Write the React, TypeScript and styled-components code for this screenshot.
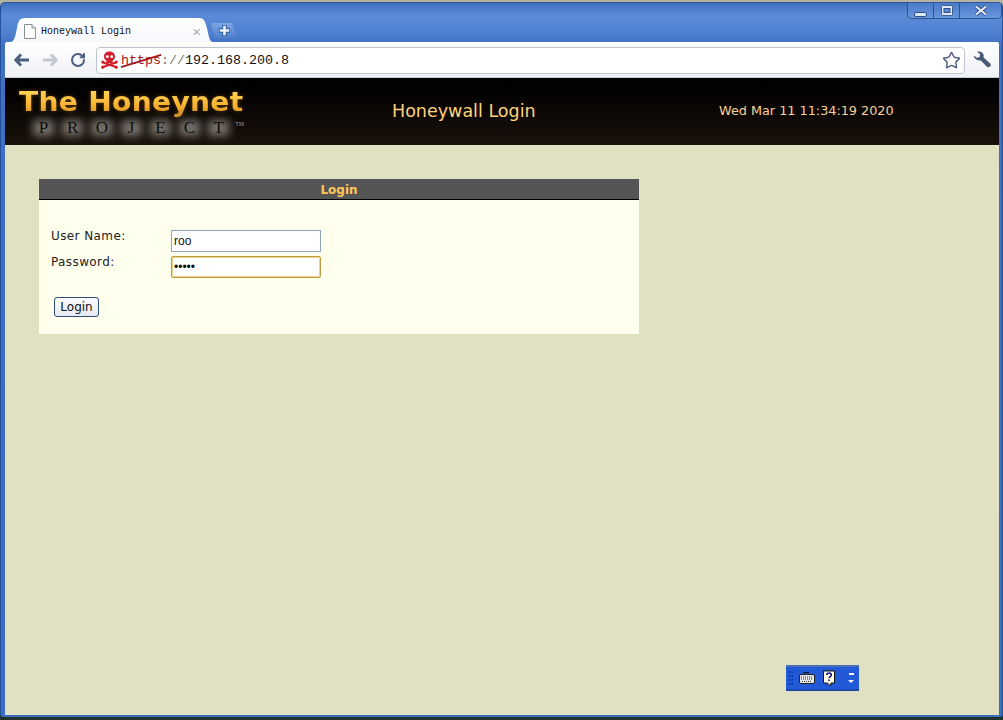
import React from 'react';
import styled, { createGlobalStyle } from 'styled-components';
import { Star, RotateCw } from 'lucide-react';

const GlobalStyle = createGlobalStyle`
  html, body {
    margin: 0;
    padding: 0;
    height: 100%;
    overflow: hidden;
    background: linear-gradient(180deg, #b5b3a0 0, #b5b3a0 6px, #22322c 6px);
  }
`;

const Frame = styled.div`
  position: relative;
  box-sizing: border-box;
  width: 1003px;
  height: 715px;
  margin-top: 2px;
  display: flex;
  flex-direction: column;
  padding: 0 3px 2px 4px;
  background: linear-gradient(180deg, #3f70bf 0, #5c8bd8 12px, #4f80d0 30px, #3f70c2 42px, #3a6cc0 100%);
  border-top: 1px solid #2d5a9e;
  border-left: 1px solid #24509c;
  border-right: 1px solid #24509c;
  border-radius: 5px 5px 3px 3px;
  font-family: "DejaVu Sans", sans-serif;
`;

const TitleStrip = styled.div`
  height: 39px;
  flex: none;
  display: flex;
  align-items: flex-end;
  justify-content: space-between;
`;

const TabRow = styled.div`
  display: flex;
  align-items: flex-end;
  padding-left: 5px;
`;

const Tab = styled.div`
  box-sizing: border-box;
  width: 203px;
  height: 24px;
  display: flex;
  align-items: center;
  padding: 2px 12px 0 14px;
  background: linear-gradient(180deg, #ffffff, #f6f8fc);
  clip-path: path('M0 24 C4 24 5 20 7 10 C8 3 10 0 15 0 L189 0 C194 0 195 3 197 10 C199 20 200 24 203 24 Z');
`;

const TabTitle = styled.span`
  flex: 1;
  margin-left: 5px;
  font: 10px "Liberation Mono", monospace;
  color: #111;
`;

const TabClose = styled.span`
  font: 15px "Liberation Sans", sans-serif;
  color: #a9adb3;
  line-height: 1;
`;

const NewTab = styled.div`
  width: 26px;
  height: 15px;
  margin: 0 0 4px -2px;
  display: flex;
  align-items: center;
  justify-content: center;
  background: linear-gradient(180deg, #7ea5e2, #4f7fcc);
  clip-path: polygon(0 0, 80% 0, 100% 100%, 14% 100%);
`;

const WindowControls = styled.div`
  align-self: flex-start;
  display: flex;
  margin-right: -3px;
  height: 16px;
  box-sizing: border-box;
  border: 1px solid #2c5596;
  border-top: none;
  border-radius: 0 0 5px 5px;
  background: linear-gradient(180deg, #4a7ac8, #6a96dc);
`;

const ControlButton = styled.div<{ $width: number }>`
  width: ${p => p.$width}px;
  display: flex;
  align-items: center;
  justify-content: center;
  & + & {
    border-left: 1px solid #2c5596;
  }
`;

const Toolbar = styled.div`
  height: 36px;
  flex: none;
  display: flex;
  align-items: center;
  padding: 0 8px 0 8px;
  box-sizing: border-box;
  background: linear-gradient(180deg, #ffffff, #eef1f6);
  border-bottom: 1px solid #c8ccd4;
  border-radius: 2px 2px 0 0;
`;

const NavIcon = styled.div<{ $gap: number }>`
  width: 17px;
  height: 17px;
  margin-right: ${p => p.$gap}px;
  display: flex;
  align-items: center;
  justify-content: center;
`;

const AddressBar = styled.div`
  flex: 1;
  height: 27px;
  margin: 1px 8px 0 10px;
  box-sizing: border-box;
  display: flex;
  align-items: center;
  padding: 0 3px 0 4px;
  background: #fff;
  border: 1px solid #bfc4cc;
  border-radius: 4px;
`;

const Url = styled.div`
  flex: 1;
  margin-left: 3px;
  font: 13.33px "Liberation Mono", monospace;
  color: #111;
  white-space: pre;
`;

const Insecure = styled.span`
  position: relative;
  color: #a3161c;
  &::after {
    content: '';
    position: absolute;
    left: -1px;
    right: -1px;
    top: 7px;
    height: 2px;
    background: #a3161c;
    transform: rotate(-17deg);
  }
`;

const Scheme = styled.span`
  color: #777;
`;

const Page = styled.div`
  flex: 1;
  display: flex;
  flex-direction: column;
  background: #e0e0c2;
`;

const Banner = styled.header`
  height: 67px;
  flex: none;
  display: grid;
  grid-template-columns: 327px 260px 1fr;
  align-items: center;
  background: linear-gradient(180deg, #000 0, #050302 30%, #1a120b 100%);
`;

const Logo = styled.div`
  padding-left: 14px;
  height: 100%;
  overflow: hidden;
  box-sizing: border-box;
`;

const LogoMark = styled.div`
  margin-top: 9px;
  width: 212px;
  font: bold 26px/30px "DejaVu Sans", sans-serif;
  letter-spacing: 0.3px;
  white-space: nowrap;
  transform: scaleX(1.08);
  transform-origin: 0 50%;
  color: transparent;
  background: linear-gradient(180deg, #ffd050 20%, #f6b02c 65%, #d9952a 85%);
  -webkit-background-clip: text;
  background-clip: text;
  filter: drop-shadow(0 0 2px rgba(190, 120, 20, 0.45));
`;

const LogoSub = styled.div`
  display: flex;
  margin: -2px 0 0 10px;
  isolation: isolate;
`;

const LogoLetter = styled.span`
  position: relative;
  width: 29.2px;
  height: 26px;
  flex: none;
  text-align: center;
  font: 17px/26px "Liberation Serif", serif;
  color: #0e0e0e;
  &::before {
    content: '';
    position: absolute;
    left: 4px;
    right: 4px;
    top: 5px;
    bottom: 5px;
    z-index: -1;
    background: #77726a;
    filter: blur(4px);
  }
`;

const LogoTm = styled.span`
  font: 6px/8px "Liberation Sans", sans-serif;
  color: #999;
  margin: 5px 0 0 2px;
`;

const BannerTitle = styled.h1`
  margin: 0 0 2px 0;
  padding-left: 60px;
  font: 400 17.5px "DejaVu Sans", sans-serif;
  color: #ffd27a;
  white-space: nowrap;
`;

const BannerDate = styled.div`
  margin-bottom: 2px;
  padding-left: 127px;
  font: 12.8px "DejaVu Sans", sans-serif;
  color: #f8d098;
  white-space: nowrap;
`;

const Content = styled.main`
  padding: 34px 0 0 34px;
`;

const Card = styled.section`
  width: 600px;
  background: #ffffee;
`;

const CardHeader = styled.div`
  height: 21px;
  box-sizing: border-box;
  padding-top: 1px;
  display: flex;
  align-items: center;
  justify-content: center;
  background: #555;
  border-bottom: 1px solid #000;
  font: bold 12px "DejaVu Sans", sans-serif;
  color: #ffc65c;
`;

const LoginForm = styled.form`
  height: 134px;
  box-sizing: border-box;
  padding: 30px 0 0 12px;
`;

const FieldGrid = styled.div`
  display: grid;
  grid-template-columns: 120px 150px;
  row-gap: 4px;
`;

const FieldLabel = styled.label`
  font: 12px/12px "DejaVu Sans", sans-serif;
  letter-spacing: 0.4px;
  color: #222;
`;

const TextField = styled.input<{ $focused?: boolean }>`
  box-sizing: border-box;
  width: 150px;
  height: 22px;
  padding: 0 2px;
  background: #fff;
  border: 1px solid ${p => (p.$focused ? '#c09a40' : '#8fa3bb')};
  border-radius: ${p => (p.$focused ? '2px' : '0')};
  box-shadow: ${p => (p.$focused ? 'inset 0 0 0 1px #ecd48c' : 'none')};
  font: 12px "Liberation Sans", sans-serif;
  color: #111;
  outline: none;
`;

const LoginButton = styled.button`
  display: block;
  box-sizing: border-box;
  width: 45px;
  height: 20px;
  margin: 19px 0 0 3px;
  padding: 0;
  background: linear-gradient(180deg, #fbfbfc, #e6e9ef);
  border: 1px solid #2f4f78;
  border-radius: 3px;
  font: 12px "DejaVu Sans", sans-serif;
  color: #111;
`;

const LanguageBar = styled.div`
  position: absolute;
  left: 785px;
  top: 662px;
  width: 73px;
  height: 26px;
  box-sizing: border-box;
  display: flex;
  align-items: center;
  padding: 0 5px 0 2px;
  background: #2159d6;
  border-top: 2px solid #4c70b8;
  border-bottom: 2px solid #1c48ab;
`;

const Grip = styled.div`
  width: 5px;
  height: 16px;
  margin-right: 6px;
  background-image: radial-gradient(circle, #0d3aa8 1px, transparent 1.2px);
  background-size: 3px 4px;
`;

const HelpSlot = styled.div`
  display: flex;
  margin-left: 7px;
`;

const ArrowStack = styled.div`
  margin-left: auto;
  display: flex;
  flex-direction: column;
  gap: 5px;
  align-items: center;
`;

const Dash = styled.span`
  width: 5px;
  height: 2px;
  background: #fff;
`;

const Caret = styled.span`
  width: 0;
  height: 0;
  border-left: 3px solid transparent;
  border-right: 3px solid transparent;
  border-top: 3px solid #fff;
`;

function PageIcon() {
  return (
    <svg width="12" height="15" viewBox="0 0 12 15" fill="none">
      <path d="M.5.5h7.500l3.500 3.500v10.500h-11z" fill="#fff" stroke="#8b8f96" />
      <path d="M8 .5v3.500h3.500" fill="#e6e8ec" stroke="#8b8f96" />
    </svg>
  );
}

function PlusIcon() {
  return (
    <svg width="13" height="13" viewBox="0 0 13 13">
      <path d="M6.500 1v11M1 6.500h11" stroke="#35609f" strokeWidth="4.500" />
      <path d="M6.500 1.800v9.400M1.800 6.500h9.400" stroke="#eef3fb" strokeWidth="2.600" />
    </svg>
  );
}

function Skull() {
  return (
    <svg width="17" height="18" viewBox="0 0 17 18">
      <path d="M2 11.500l13 4.500M15 11.500L2 16" stroke="#d4202c" strokeWidth="2.200" />
      <circle cx="1.800" cy="11" r="1.600" fill="#d4202c" />
      <circle cx="15.200" cy="11" r="1.600" fill="#d4202c" />
      <circle cx="1.800" cy="16.200" r="1.600" fill="#d4202c" />
      <circle cx="15.200" cy="16.200" r="1.600" fill="#d4202c" />
      <path d="M8.500 .5C5 .5 3 2.800 3 5.500c0 2 1 3.300 2.300 4V12h6.400V9.500C13 8.800 14 7.500 14 5.500 14 2.800 12 .5 8.500 .5z" fill="#d4202c" />
      <circle cx="6.300" cy="5.700" r="1.400" fill="#fff" />
      <circle cx="10.700" cy="5.700" r="1.400" fill="#fff" />
    </svg>
  );
}

function BackArrow({ color }: { color: string }) {
  return (
    <svg width="16" height="14" viewBox="0 0 16 14" fill="none">
      <path d="M7 1.500L1.800 7 7 12.500M2 7h13" stroke={color} strokeWidth="3" />
    </svg>
  );
}

function ForwardArrow({ color }: { color: string }) {
  return (
    <svg width="16" height="14" viewBox="0 0 16 14" fill="none">
      <path d="M9 1.500L14.200 7 9 12.500M14 7H1" stroke={color} strokeWidth="3" />
    </svg>
  );
}

function Wrench() {
  return (
    <svg width="18" height="18" viewBox="0 0 18 18">
      <path d="M.8 4.500L4.300 7 7 5.600 6.700 2.600 3.800 .9C6.500-.2 9.800.9 10.500 3.600c.3 1 .2 1.900-.1 2.600l6.800 6.300c.9 1 .8 2.200-.1 3.100-.9.900-2.300 1-3.200.1L7.500 9.300c-1 .3-2.400.2-3.500-.3C2 8 .6 6.400.8 4.500z" fill="#4a5a75" />
    </svg>
  );
}

function KeyboardIcon() {
  return (
    <svg width="16" height="14" viewBox="0 0 16 14">
      <path d="M5 3V1.500h5" stroke="#111" fill="none" />
      <rect x=".5" y="3.500" width="15" height="9" rx="1.500" fill="#e8e8e8" stroke="#222" />
      <path d="M2 6h12M2 8h12M3 10.500h10" stroke="#333" strokeWidth="1" strokeDasharray="1 1" />
    </svg>
  );
}

function HelpIcon() {
  return (
    <svg width="14" height="17" viewBox="0 0 14 17">
      <path d="M1.500 1h11v12H9l-.5 3-3-3h-4z" fill="#ffffe6" stroke="#111" />
      <path d="M4.800 5c0-1.500 1-2 2.200-2s2.300.7 2.300 1.900c0 1.700-2.300 1.700-2.300 3.400M7 9.500v1.600" fill="none" stroke="#10108c" strokeWidth="1.600" />
    </svg>
  );
}

export default function App() {
  return (
    <Frame>
      <GlobalStyle />
      <TitleStrip>
        <TabRow>
          <Tab>
            <PageIcon />
            <TabTitle>Honeywall Login</TabTitle>
            <TabClose>×</TabClose>
          </Tab>
          <NewTab><PlusIcon /></NewTab>
        </TabRow>
        <WindowControls>
          <ControlButton $width={25}>
            <svg width="13" height="15" viewBox="0 0 13 15"><rect width="12" height="4" x=".5" y="9.500" rx="1.500" fill="#dfe8f6" stroke="#2d4f86" /></svg>
          </ControlButton>
          <ControlButton $width={25}>
            <svg width="12" height="11" viewBox="0 0 12 11"><rect width="11" height="10" x=".5" y=".5" rx="1" fill="#dfe8f6" stroke="#3d5f96" /><rect width="6" height="4" x="3" y="3.500" fill="#5b88d0" stroke="#2d4f86" /></svg>
          </ControlButton>
          <ControlButton $width={41}>
            <svg width="14" height="11" viewBox="0 0 14 11"><path d="M2 1.500l10 8M12 1.500l-10 8" stroke="#2d4f86" strokeWidth="3.800" /><path d="M2 1.500l10 8M12 1.500l-10 8" stroke="#e6edf8" strokeWidth="2" /></svg>
          </ControlButton>
        </WindowControls>
      </TitleStrip>
      <Toolbar>
        <NavIcon $gap={11}><BackArrow color="#4c5f7e" /></NavIcon>
        <NavIcon $gap={11}><ForwardArrow color="#c3c9d3" /></NavIcon>
        <NavIcon $gap={0}><RotateCw size={16} strokeWidth={3} color="#4c5f7e" /></NavIcon>
        <AddressBar>
          <Skull />
          <Url>
            <Insecure>https</Insecure><Scheme>://</Scheme>192.168.200.8
          </Url>
          <Star size={19} color="#4c5f7e" strokeWidth={1.800} />
        </AddressBar>
        <Wrench />
      </Toolbar>
      <Page>
        <Banner>
          <Logo>
            <LogoMark>The Honeynet</LogoMark>
            <LogoSub>
              {'PROJECT'.split('').map((letter, i) => (
                <LogoLetter key={i}>{letter}</LogoLetter>
              ))}
              <LogoTm>TM</LogoTm>
            </LogoSub>
          </Logo>
          <BannerTitle>Honeywall Login</BannerTitle>
          <BannerDate>Wed Mar 11 11:34:19 2020</BannerDate>
        </Banner>
        <Content>
          <Card>
            <CardHeader>Login</CardHeader>
            <LoginForm>
              <FieldGrid>
                <FieldLabel>User Name:</FieldLabel>
                <TextField defaultValue="roo" />
                <FieldLabel>Password:</FieldLabel>
                <TextField $focused type="password" defaultValue="hello" />
              </FieldGrid>
              <LoginButton type="button">Login</LoginButton>
            </LoginForm>
          </Card>
        </Content>
      </Page>
      <LanguageBar>
        <Grip />
        <KeyboardIcon />
        <HelpSlot><HelpIcon /></HelpSlot>
        <ArrowStack>
          <Dash />
          <Caret />
        </ArrowStack>
      </LanguageBar>
    </Frame>
  );
}
